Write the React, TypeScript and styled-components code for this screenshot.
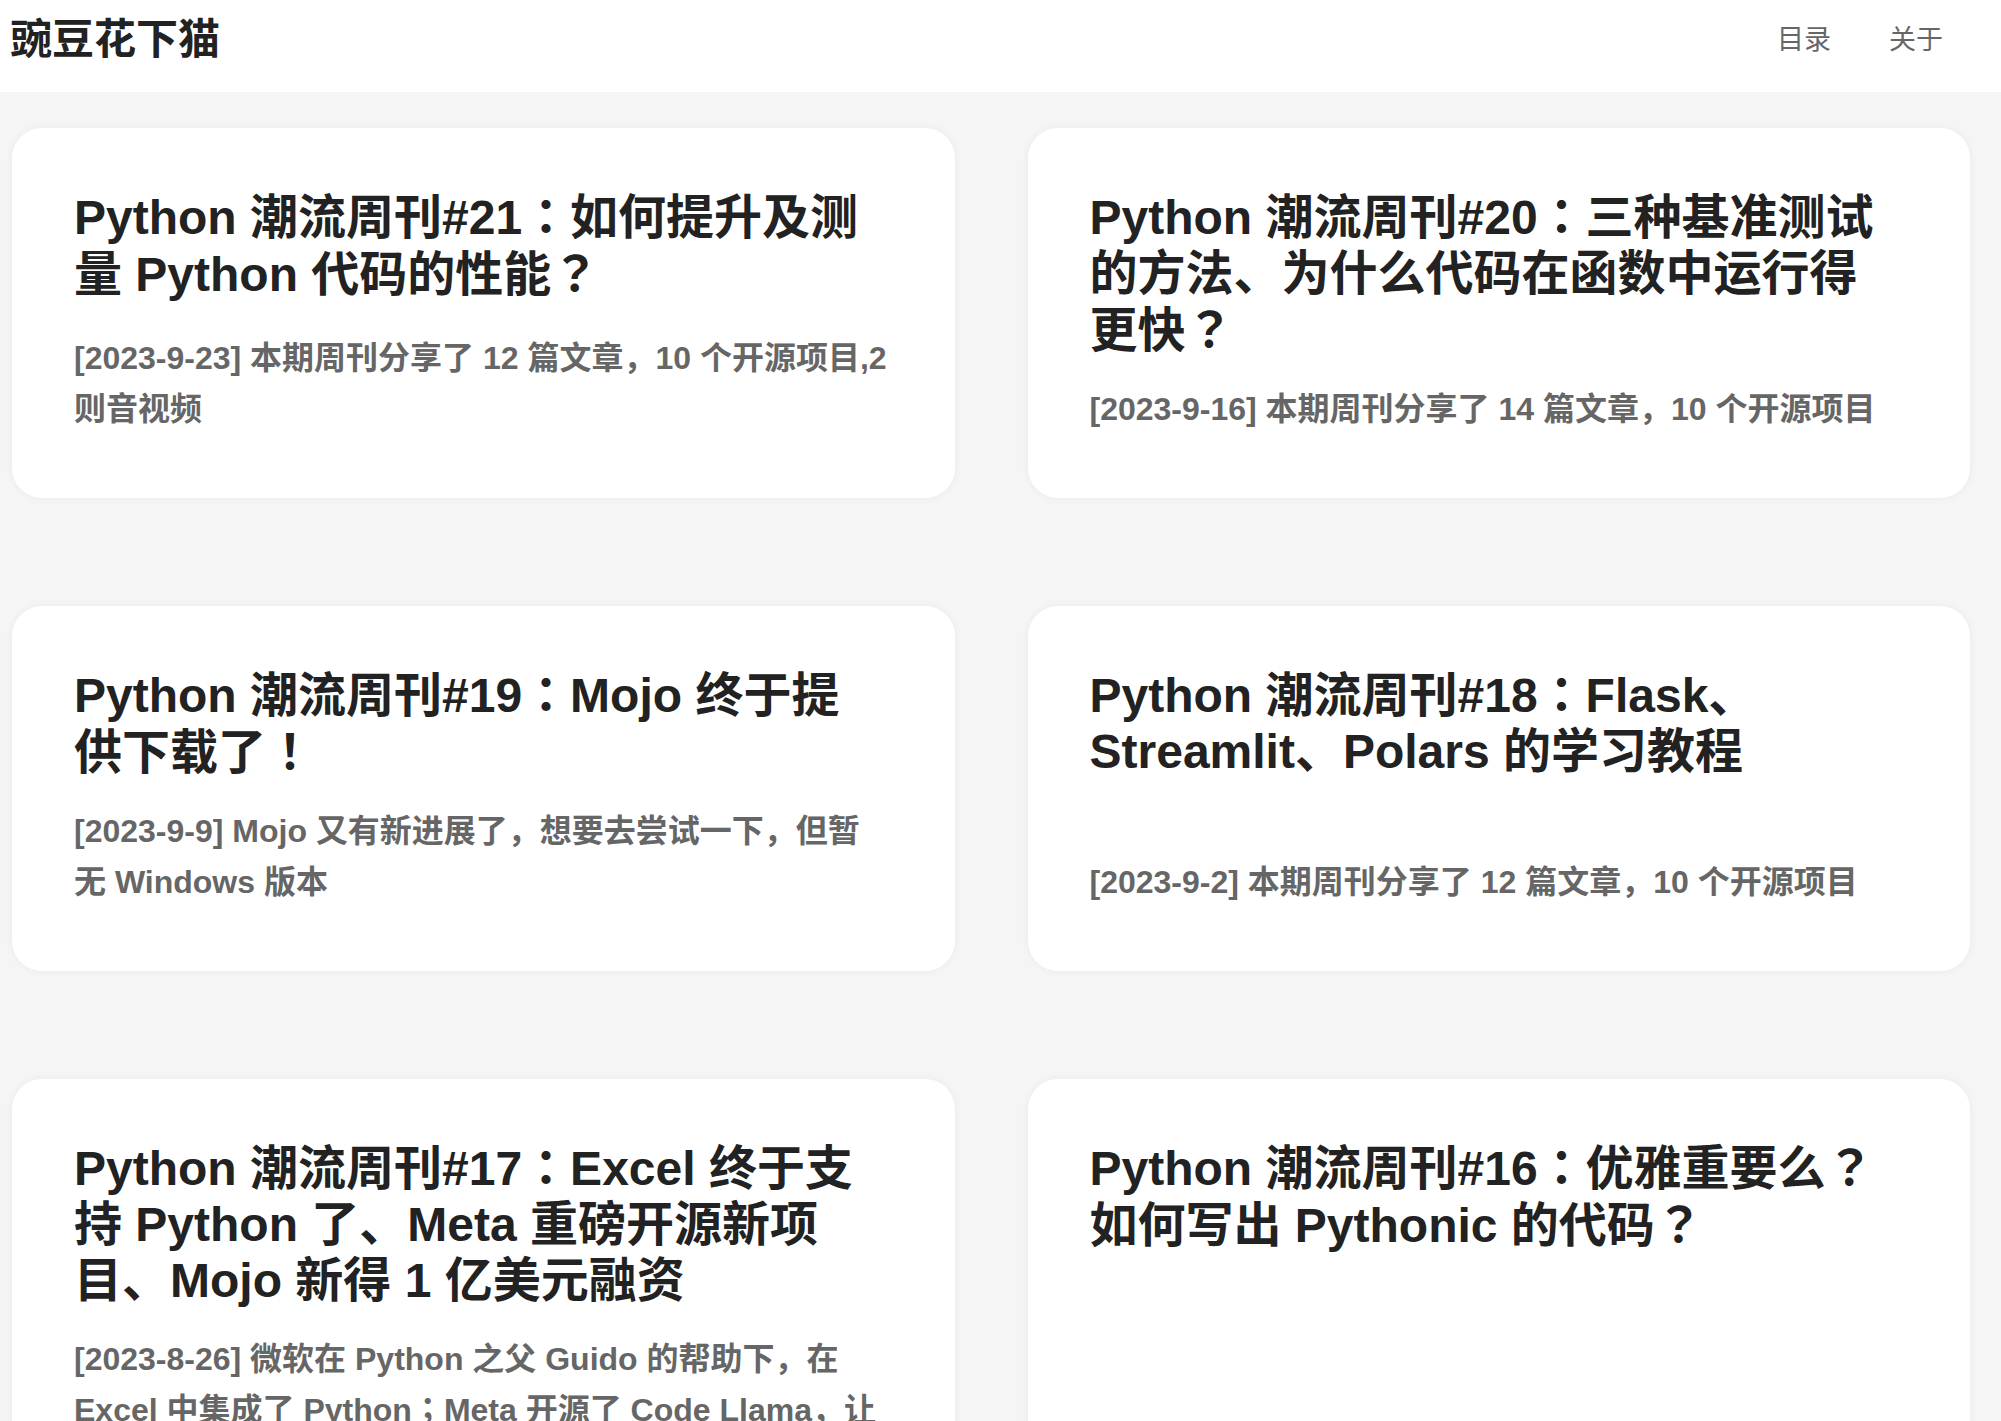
import React from "react";
import styled, { createGlobalStyle } from "styled-components";

const GlobalStyle = createGlobalStyle`
  html, body {
    margin: 0;
    padding: 0;
    background: #f5f5f5;
    font-family: "Liberation Sans", "Noto Sans CJK SC", sans-serif;
  }
  * {
    box-sizing: border-box;
  }
`;

interface Post {
  id: number;
  title: string;
  date: string;
  summary: string;
}

const posts: Post[] = [
  {
    id: 21,
    title: "Python 潮流周刊#21：如何提升及测量 Python 代码的性能？",
    date: "2023-9-23",
    summary: "本期周刊分享了 12 篇文章，10 个开源项目,2 则音视频",
  },
  {
    id: 20,
    title: "Python 潮流周刊#20：三种基准测试的方法、为什么代码在函数中运行得更快？",
    date: "2023-9-16",
    summary: "本期周刊分享了 14 篇文章，10 个开源项目",
  },
  {
    id: 19,
    title: "Python 潮流周刊#19：Mojo 终于提供下载了！",
    date: "2023-9-9",
    summary: "Mojo 又有新进展了，想要去尝试一下，但暂无 Windows 版本",
  },
  {
    id: 18,
    title: "Python 潮流周刊#18：Flask、Streamlit、Polars 的学习教程",
    date: "2023-9-2",
    summary: "本期周刊分享了 12 篇文章，10 个开源项目",
  },
  {
    id: 17,
    title: "Python 潮流周刊#17：Excel 终于支持 Python 了、Meta 重磅开源新项目、Mojo 新得 1 亿美元融资",
    date: "2023-8-26",
    summary:
      "微软在 Python 之父 Guido 的帮助下，在 Excel 中集成了 Python；Meta 开源了 Code Llama，让代码生成更加简单",
  },
  {
    id: 16,
    // the original breaks right after the question mark
    title: "Python 潮流周刊#16：优雅重要么？\n如何写出 Pythonic 的代码？",
    date: "2023-8-19",
    summary: "本期周刊分享了 12 篇文章，10 个开源项目",
  },
];

const Header = styled.header`
  height: 92px;
  padding: 0 58px 12px 10px;
  background: #fff;
  display: flex;
  align-items: center;
  justify-content: space-between;
`;

const Logo = styled.a`
  font-size: 42px;
  font-weight: 700;
  color: #222;
  text-decoration: none;
  line-height: 1;
`;

const Nav = styled.nav`
  display: flex;
  gap: 58px;
`;

const NavLink = styled.a`
  font-size: 27px;
  color: #666;
  text-decoration: none;
  line-height: 1;
`;

const Grid = styled.main`
  display: grid;
  grid-template-columns: 1fr 1fr;
  column-gap: 73px;
  row-gap: 108px;
  padding: 36px 31px 60px 12px;
`;

const Card = styled.article`
  background: #fff;
  border-radius: 30px;
  box-shadow: 0 0 8px rgba(0, 0, 0, 0.05);
  padding: 61px 65px 63px 62px;
  display: flex;
  flex-direction: column;
`;

const Title = styled.h2`
  margin: 0 0 25px;
  max-width: 788px;
  font-size: 48px;
  line-height: 56px;
  font-weight: 700;
  color: #222;
  white-space: pre-line;
`;

const Summary = styled.p`
  margin: auto 0 0;
  font-size: 32px;
  line-height: 51px;
  font-weight: 700;
  color: #666;
`;

// colon and question/exclamation marks sit in the middle of their cell
const Punct = styled.span`
  font-family: "Noto Sans CJK TC", "Noto Sans CJK SC", sans-serif;
  line-height: 1;
`;

const MARKS = /([：？！；])/;

const withPunct = (text: string) =>
  text.split(MARKS).map((part, i) =>
    i % 2 === 1 ? <Punct key={i}>{part}</Punct> : part
  );

const PostCard: React.FC<{ post: Post }> = ({ post }) => (
  <Card>
    <Title>{withPunct(post.title)}</Title>
    <Summary>
      [{post.date}] {withPunct(post.summary)}
    </Summary>
  </Card>
);

export default function App() {
  return (
    <>
      <GlobalStyle />
      <Header>
        <Logo href="#">豌豆花下猫</Logo>
        <Nav>
          <NavLink href="#">目录</NavLink>
          <NavLink href="#">关于</NavLink>
        </Nav>
      </Header>
      <Grid>
        {posts.map(post => (
          <PostCard key={post.id} post={post} />
        ))}
      </Grid>
    </>
  );
}
